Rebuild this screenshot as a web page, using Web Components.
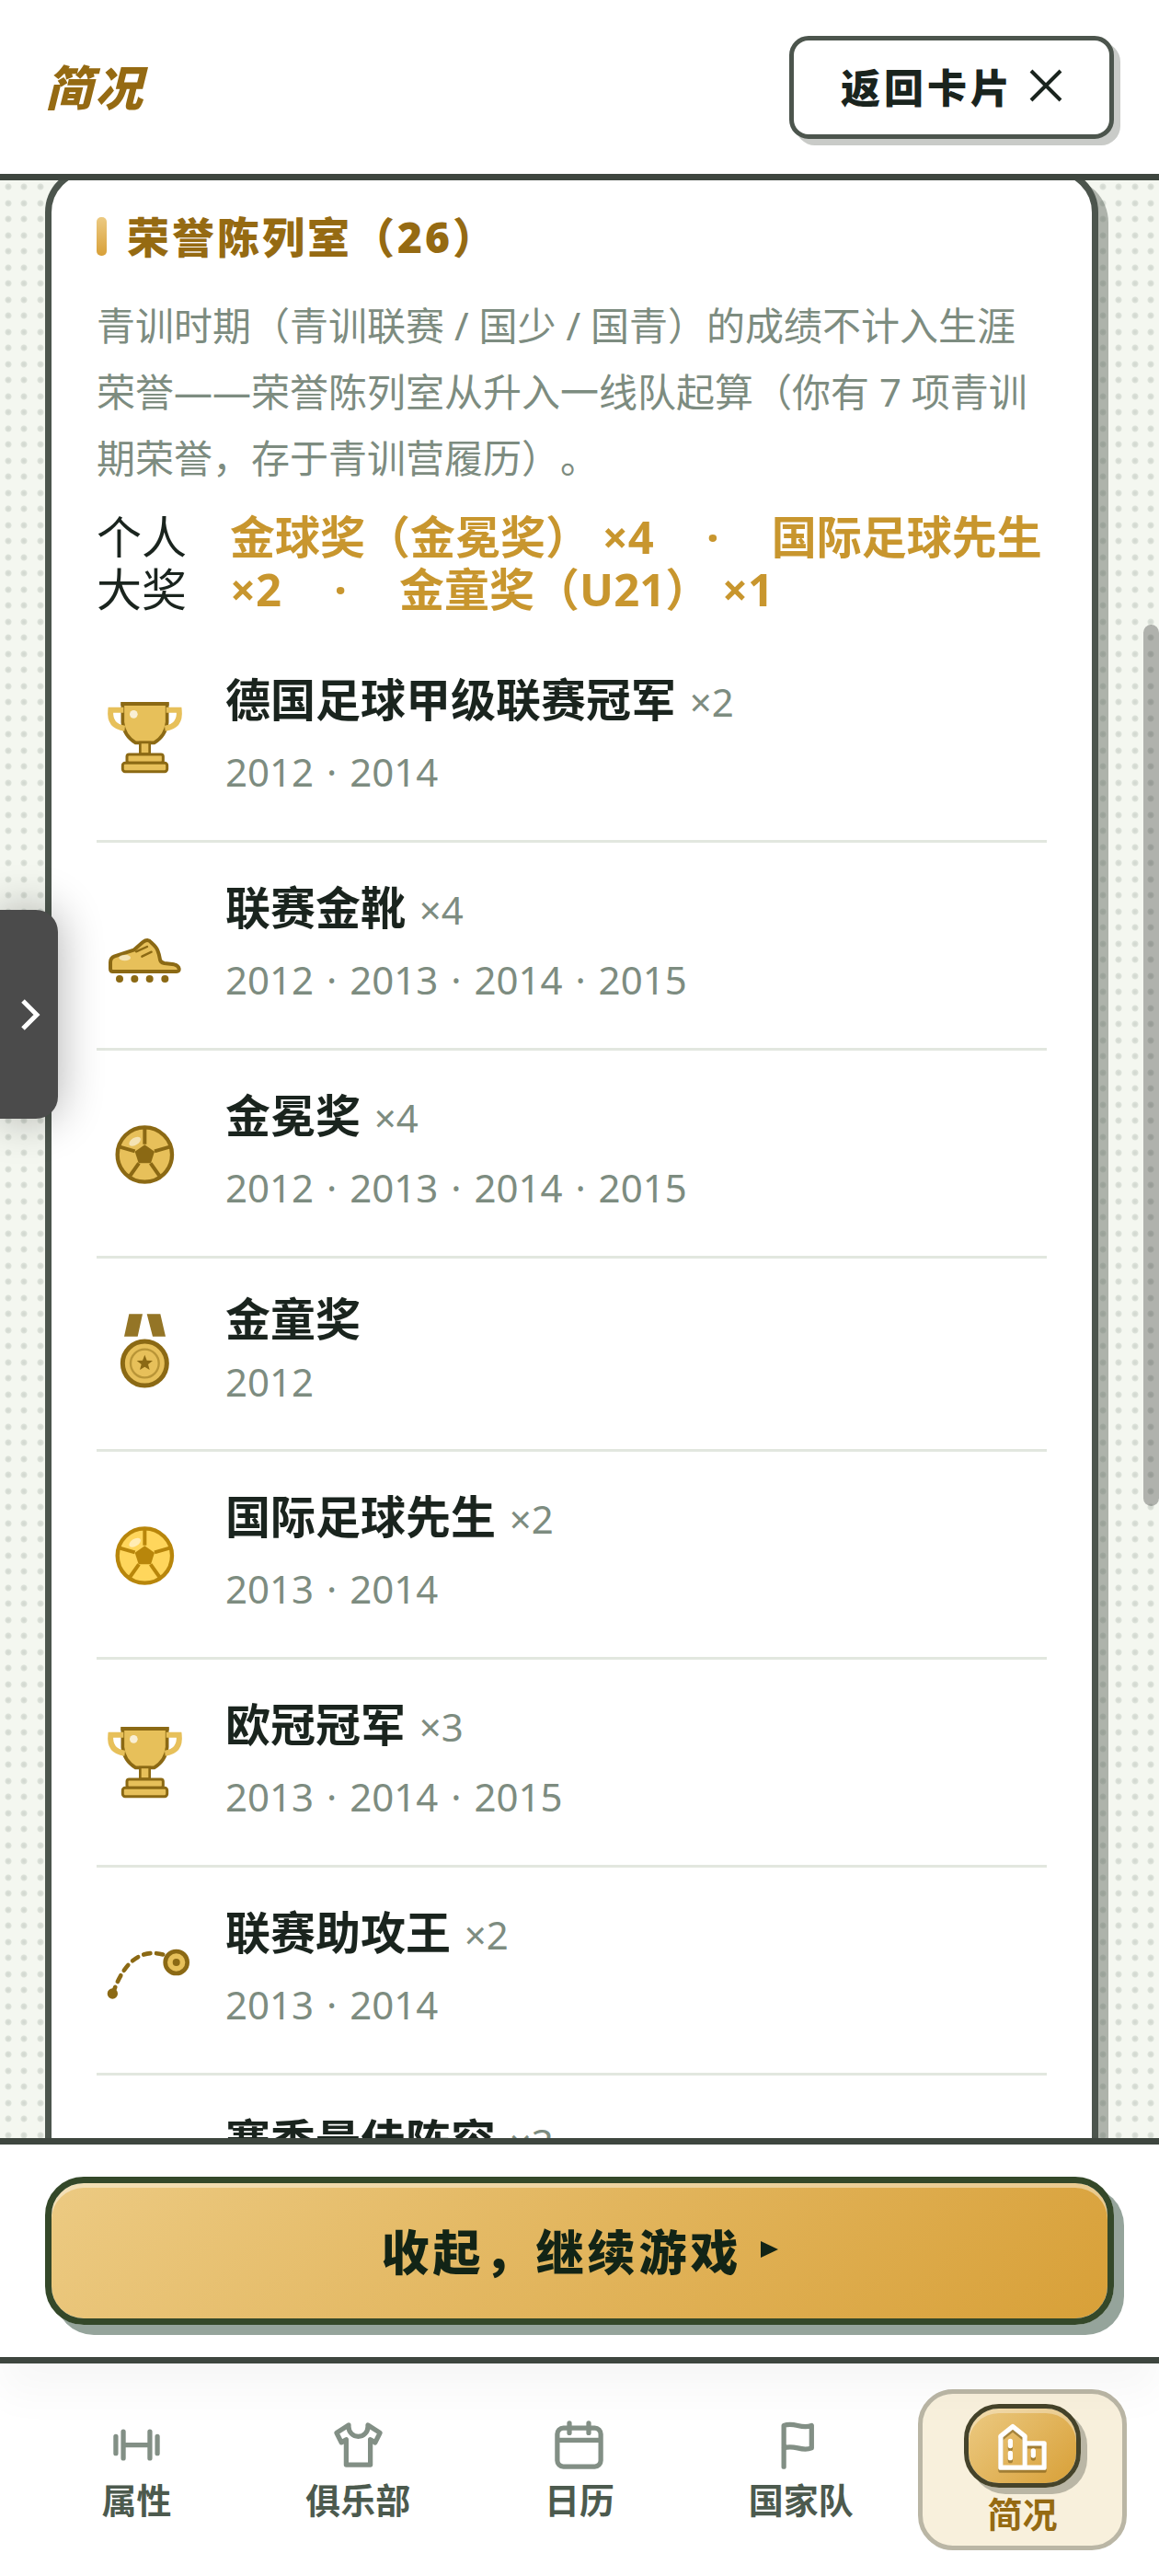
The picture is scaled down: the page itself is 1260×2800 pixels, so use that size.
<!DOCTYPE html>
<html lang="zh-CN">
<head>
<meta charset="utf-8">
<meta name="viewport" content="width=device-width, initial-scale=1">
<title>简况</title>
<style>
    :root {
        --ink: #1a241e;
        --muted: #7d8c80;
        --frame: #4c554d;
        --bar: #3e463f;
        --gold-text: #956a12;
        --gold: #c8962e;
        --gold-fill: linear-gradient(135deg, #ecca82, #d8a038);
    }

    body {
        color: var(--ink);
        font-family: "Noto Sans", "Noto Sans CJK SC", sans-serif;
        font-size: 49px;
        margin: 0;
        text-spacing-trim: space-all;
    }
</style>
</head>
<body>
<profile-screen>
    <screen-header slot="header" heading="简况">返回卡片</screen-header>
    <honor-card>
        <span slot="title">荣誉陈列室（26）</span>
        <span slot="note">青训时期（青训联赛 / 国少 / 国青）的成绩不计入生涯荣誉——荣誉陈列室从升入一线队起算（你有 7 项青训期荣誉，存于青训营履历）。</span>
        <span slot="label">个人大奖</span>
        <span slot="awards">金球奖（金冕奖） ×4&thinsp;&emsp;·&emsp;&thinsp;国际足球先生 ×2&thinsp;&emsp;·&emsp;&thinsp;金童奖（U21） ×1</span>
        <honor-item icon="trophy" count="2" years="2012 · 2014">德国足球甲级联赛冠军</honor-item>
        <honor-item icon="boot" count="4" years="2012 · 2013 · 2014 · 2015">联赛金靴</honor-item>
        <honor-item icon="ball" count="4" years="2012 · 2013 · 2014 · 2015">金冕奖</honor-item>
        <honor-item icon="medal" years="2012">金童奖</honor-item>
        <honor-item icon="ball" bright count="2" years="2013 · 2014">国际足球先生</honor-item>
        <honor-item icon="trophy" count="3" years="2013 · 2014 · 2015">欧冠冠军</honor-item>
        <honor-item icon="assist" count="2" years="2013 · 2014">联赛助攻王</honor-item>
        <honor-item icon="star" count="3">赛季最佳阵容</honor-item>
    </honor-card>
    <continue-bar slot="footer">收起，继续游戏</continue-bar>
    <tab-bar slot="footer">
        <tab-item icon="dumbbell">属性</tab-item>
        <tab-item icon="shirt">俱乐部</tab-item>
        <tab-item icon="calendar">日历</tab-item>
        <tab-item icon="flag">国家队</tab-item>
        <tab-item icon="building" active>简况</tab-item>
    </tab-bar>
    <side-handle slot="overlay"></side-handle>
</profile-screen>

<script>
const ball = /* html */`
    <circle cx="472" cy="1067" r="89" fill="var(--fill)" stroke="var(--line)" stroke-width="13"/>
    <path d="M472 1035l32 22-12 38h-40l-12-38z" fill="var(--line)"/>
    <path d="M472 1033v-52M504 1056l52-15M491 1095l31 44M453 1095l-31 44M440 1056l-52-15" fill="none" stroke="var(--line)" stroke-width="12"/>
    <ellipse cx="440" cy="1024" rx="21" ry="12" transform="rotate(-32 440 1024)" fill="#fff" opacity=".55"/>`;

const honorIcons = {
    trophy: ["75 30 315 315", /* html */`
        <path d="M160 78h145v60q-4 44-42 67h-61q-38-23-42-67z" fill="var(--fill)" stroke="var(--line)" stroke-width="11"/>
        <path d="M154 78h157" stroke="var(--line)" stroke-width="12"/>
        <path d="M163 98h-42q-6 54 46 60M302 98h42q6 54-46 60" fill="none" stroke="var(--fill)" stroke-width="18"/>
        <path d="M217 204h31v38h-31z" fill="var(--fill)" stroke="var(--line)" stroke-width="8"/>
        <rect x="174" y="243" width="118" height="28" rx="7" fill="var(--fill)" stroke="var(--line)" stroke-width="9"/>
        <rect x="160" y="271" width="145" height="28" rx="8" fill="var(--fill)" stroke="var(--line)" stroke-width="9"/>
        <circle cx="196" cy="112" r="13" fill="#fff" opacity=".75"/>`],
    boot: ["315 227 315 315", /* html */`
        <path d="M368 470q-8 0-8-9V440q0-15 14-20l62-20 30-26q16-13 28 2 16 14 20 25 5 12 8 30 1 9 14 12l32 4q14 3 16 14 1 9-8 9z" fill="var(--fill)" stroke="var(--line)" stroke-width="12" stroke-linejoin="round"/>
        <path d="M444 405l36-16M463 421l31-15" stroke="var(--line)" stroke-width="7" stroke-linecap="round"/>
        <ellipse cx="407" cy="425" rx="19" ry="10" fill="#fff" opacity=".55"/>
        <g fill="var(--line)"><circle cx="390" cy="494" r="12"/><circle cx="439" cy="494" r="12"/><circle cx="488" cy="494" r="12"/><circle cx="538" cy="494" r="12"/></g>`],
    ball: ["315 905 315 315", ball],
    medal: ["75 88 315 315", /* html */`
        <path d="M181 116h44l-16 73h-44zM239 116h44l17 73h-42z" fill="var(--line)" opacity=".92"/>
        <circle cx="232" cy="277" r="72" fill="var(--fill)" stroke="var(--line)" stroke-width="15"/>
        <circle cx="232" cy="277" r="46" fill="none" stroke="var(--line)" stroke-width="7" opacity=".5"/>
        <path d="M232 249l7 18 19 1-15 12 5 18-16-10-16 10 5-18-15-12 19-1z" fill="var(--line)"/>`],
    assist: ["75 26 315 315", /* html */`
        <path d="M128 260Q184 96 304 136" fill="none" stroke="var(--line)" stroke-width="14" stroke-linecap="round" stroke-dasharray="22 20"/>
        <circle cx="127" cy="260" r="17" fill="var(--line)"/>
        <circle cx="335" cy="158" r="36" fill="var(--fill)" stroke="var(--line)" stroke-width="14"/>
        <circle cx="335" cy="158" r="12" fill="var(--line)"/>`],
    star: ["0 0 315 315", /* html */`
        <path d="M158 40l34 80 86 7-66 56 21 84-75-45-75 45 21-84-66-56 86-7z" fill="var(--fill)" stroke="var(--line)" stroke-width="12" stroke-linejoin="round"/>`],
};

const tabIcons = {
    dumbbell: "M6.5 6.5v11M17.5 6.5v11M3.4 8.5v7M20.6 8.5v7M6.5 12h11",
    shirt: "M8 3.8L3 7l2 4 2-1.2V20.2h10V9.8l2 1.2 2-4-5-3.2v.7a4 4 0 0 1-8 0z",
    calendar: "M5.5 5h13A2.5 2.5 0 0 1 21 7.5v11A2.5 2.5 0 0 1 18.5 21h-13A2.5 2.5 0 0 1 3 18.5v-11A2.5 2.5 0 0 1 5.5 5zM3 10h18M8 3v4M16 3v4",
    flag: "M5 21V4c4.5-1.7 7 1.7 11.5 0v9.3c-4.5 1.7-7-1.7-11.5 0",
    building: "M3 21V8l5-4 5 4v13zM13 11h8v10h-8M7 10v2M7 15v2M16.5 14v2",
};

class BaseElement extends HTMLElement {
    connectedCallback() {
        if (this.shadowRoot) {
            return;
        }

        const template = document.createElement("template");
        template.innerHTML = this.render();
        this.attachShadow({ mode: "open" }).appendChild(template.content.cloneNode(true));
    }
}

customElements.define("profile-screen", class extends BaseElement {
    render() {
        return /* html */`
<style>
    :host {
        display: flex;
        flex-direction: column;
        height: 100vh;
        position: relative;
    }

    .view {
        --dot: #d3d9d1 1px, #dde2da 3px, transparent 4px;
        background-color: #f4f7f0;
        background-image:
            radial-gradient(circle at 9px 7px, var(--dot)),
            radial-gradient(circle at 26px 7px, var(--dot)),
            radial-gradient(circle at 9px 25px, var(--dot)),
            radial-gradient(circle at 26px 25px, var(--dot));
        background-size: 35px 35px;
        flex: 1;
        min-height: 0;
        position: relative;
    }

    main {
        box-sizing: border-box;
        height: 100%;
        overflow-y: auto;
        padding-inline: 49px 66px;
        scrollbar-width: none;
    }

    .thumb {
        background: rgb(0 0 0 / 28%);
        border-radius: 9px;
        height: 45%;
        position: absolute;
        right: 0;
        top: 483px;
        width: 17px;
    }
</style>
<slot name="header"></slot>
<div class="view">
    <main><slot></slot></main>
    <div class="thumb"></div>
</div>
<slot name="footer"></slot>
<slot name="overlay"></slot>
`;
    }
});

customElements.define("screen-header", class extends BaseElement {
    render() {
        return /* html */`
<style>
    :host {
        align-items: center;
        background: #fff;
        border-bottom: 7px solid var(--bar);
        display: flex;
        justify-content: space-between;
        padding: 39px 49px 38px;
        position: relative;
        z-index: 1;
    }

    h1 {
        color: var(--gold-text);
        font-size: 52px;
        font-style: italic;
        font-weight: 900;
        letter-spacing: 2px;
        line-height: 1;
        margin: 0;
    }

    button {
        align-items: center;
        background: #fff;
        border: 5px solid var(--frame);
        border-radius: 21px;
        box-shadow: 7px 7px 0 #c9cbc8;
        color: var(--ink);
        display: flex;
        font: inherit;
        font-size: 43px;
        font-weight: 900;
        gap: 17px;
        height: 112px;
        letter-spacing: 4px;
        padding: 0 51px 4px;
    }

    svg {
        height: 36px;
        width: 36px;
    }
</style>
<h1>${this.getAttribute("heading")}</h1>
<button type="button"><slot></slot><svg viewBox="0 0 36 36" aria-hidden="true"><path d="M2 2l32 32M34 2L2 34" stroke="currentColor" stroke-width="4"/></svg></button>
`;
    }
});

customElements.define("honor-card", class extends BaseElement {
    render() {
        return /* html */`
<style>
    :host {
        background: #fff;
        border: 7px solid var(--frame);
        border-radius: 49px;
        box-shadow: 11px 11px 0 rgb(76 85 77 / 42%);
        display: block;
        margin-top: -14px;
        padding: 32px 49px 49px;
    }

    h2 {
        align-items: center;
        color: var(--gold-text);
        display: flex;
        font-size: 46px;
        font-weight: 900;
        gap: 22px;
        letter-spacing: 3px;
        line-height: 72px;
        margin: 0 0 25px;
    }

    h2::before {
        background: linear-gradient(#ecca82, #d8a038);
        border-radius: 5px;
        content: "";
        height: 42px;
        width: 11px;
    }

    p {
        color: var(--muted);
        font-size: 42px;
        line-height: 72px;
        margin: 0 0 21px;
    }

    .awards {
        display: grid;
        gap: 47px;
        grid-template-columns: 98px 1fr;
        line-height: 57px;
        margin-bottom: 21px;
    }

    strong {
        color: var(--gold);
    }
</style>
<h2><slot name="title"></slot></h2>
<p><slot name="note"></slot></p>
<div class="awards">
    <slot name="label"></slot>
    <strong><slot name="awards"></slot></strong>
</div>
<slot></slot>
`;
    }
});

customElements.define("honor-item", class extends BaseElement {
    render() {
        const [viewBox, shapes] = honorIcons[this.getAttribute("icon")];
        const count = this.getAttribute("count");
        const years = (this.getAttribute("years") ?? "").replaceAll("·", "<span>·</span>");

        return /* html */`
<style>
    :host {
        --fill: #e7c05a;
        --line: #8b6914;
        align-items: center;
        border-bottom: 3px solid #e2e7df;
        display: flex;
        gap: 35px;
        padding-block: 32px;
    }

    :host([count]) {
        padding-block: 33px;
    }

    :host([bright]) {
        --fill: #ffd65c;
        --line: #b8860b;
    }

    svg {
        flex: none;
        height: 105px;
        width: 105px;
    }

    .text {
        padding-bottom: 6px;
    }

    h3 {
        font-size: 49px;
        font-weight: 700;
        line-height: 66px;
        margin: 0;
    }

    :host([count]) h3 {
        line-height: 74px;
        margin-bottom: 6px;
    }

    small {
        color: var(--muted);
        font-size: 42px;
        font-weight: 400;
        line-height: 1;
        margin-left: 2px;
    }

    p {
        color: var(--muted);
        font-size: 42px;
        line-height: 71px;
        margin: 0;
        min-height: 71px;
    }

    p span {
        margin-inline: 3px;
    }
</style>
<svg viewBox="${viewBox}" aria-hidden="true">${shapes}</svg>
<div class="text">
    <h3><slot></slot>${count ? ` <small>×${count}</small>` : ""}</h3>
    <p>${years}</p>
</div>
`;
    }
});

customElements.define("continue-bar", class extends BaseElement {
    render() {
        return /* html */`
<style>
    :host {
        background: #fff;
        border-block: 7px solid var(--bar);
        box-shadow: 0 35px 42px rgb(0 0 0 / 3%);
        display: block;
        padding: 35px 49px;
        position: relative;
        z-index: 1;
    }

    button {
        align-items: center;
        background: var(--gold-fill) padding-box;
        border: 7px solid #344829;
        border-radius: 42px;
        box-shadow: 11px 11px 0 #95a49b, inset 0 5px 0 rgb(255 255 255 / 42%);
        color: #122416;
        display: flex;
        font: inherit;
        font-size: 52px;
        font-weight: 900;
        gap: 20px;
        height: 161px;
        justify-content: center;
        letter-spacing: 4px;
        padding-bottom: 4px;
        width: 100%;
    }

    svg {
        height: 18px;
        width: 19px;
    }
</style>
<button type="button"><slot></slot><svg viewBox="0 0 19 18" aria-hidden="true"><path d="M0 0l19 9-19 9z" fill="currentColor"/></svg></button>
`;
    }
});

customElements.define("tab-bar", class extends BaseElement {
    render() {
        return /* html */`
<style>
    :host {
        background: #fff;
        display: block;
    }

    nav {
        display: grid;
        grid-template-columns: repeat(5, 1fr);
        padding: 28px;
    }
</style>
<nav><slot></slot></nav>
`;
    }
});

customElements.define("tab-item", class extends BaseElement {
    render() {
        const current = this.hasAttribute("active") ? 'aria-current="page"' : "";

        return /* html */`
<style>
    :host {
        display: block;
        padding-inline: 7px;
    }

    a {
        align-items: center;
        border: 5px solid transparent;
        border-radius: 38px;
        box-sizing: border-box;
        color: #4c5a4e;
        display: flex;
        flex-direction: column;
        font-size: 38px;
        font-weight: 700;
        height: 175px;
        justify-content: center;
        line-height: 56px;
        text-decoration: none;
    }

    .icon {
        color: #828f85;
        display: flex;
        padding-top: 2px;
    }

    svg {
        height: 63px;
        width: 63px;
    }

    :host([active]) a {
        background: #f8f0dc;
        border-color: #bab6a5;
        color: var(--gold-text);
    }

    :host([active]) .icon {
        background: var(--gold-fill) padding-box;
        border: 5px solid #45432a;
        border-radius: 38px;
        box-shadow: 7px 7px 0 #bab6a5, inset 0 5px 0 rgb(255 255 255 / 35%);
        color: #fff;
        margin-top: 3px;
        padding: 9px 27px;
    }

    :host([active]) svg {
        filter: drop-shadow(0 3px 0 rgb(70 50 0 / 40%));
    }
</style>
<a href="#" ${current}>
    <span class="icon"><svg viewBox="0 0 24 24" fill="none" stroke="currentColor" stroke-width="2" stroke-linecap="round" stroke-linejoin="round" aria-hidden="true"><path d="${tabIcons[this.getAttribute("icon")]}"/></svg></span>
    <slot></slot>
</a>
`;
    }
});

customElements.define("side-handle", class extends BaseElement {
    render() {
        return /* html */`
<style>
    :host {
        left: 0;
        position: absolute;
        top: 989px;
        z-index: 2;
    }

    button {
        align-items: center;
        background: #4b4b4b;
        border: 0;
        border-radius: 0 24px 24px 0;
        box-shadow: 0 0 49px rgb(0 0 0 / 32%);
        color: #fff;
        display: flex;
        height: 227px;
        justify-content: center;
        padding: 0 19px 0 23px;
        width: 63px;
    }

    svg {
        height: 34px;
        width: 21px;
    }
</style>
<button type="button" aria-label="展开"><svg viewBox="0 0 21 34" aria-hidden="true"><path d="M2 2l15 15L2 32" fill="none" stroke="currentColor" stroke-width="5"/></svg></button>
`;
    }
});
</script>
</body>
</html>
